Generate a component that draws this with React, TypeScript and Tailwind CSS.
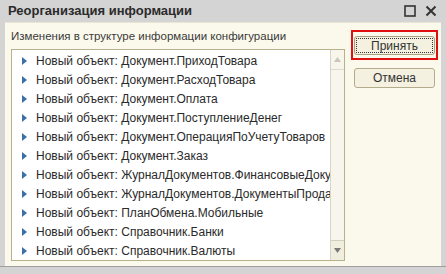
const items = [
  "Новый объект: Документ.ПриходТовара",
  "Новый объект: Документ.РасходТовара",
  "Новый объект: Документ.Оплата",
  "Новый объект: Документ.ПоступлениеДенег",
  "Новый объект: Документ.ОперацияПоУчетуТоваров",
  "Новый объект: Документ.Заказ",
  "Новый объект: ЖурналДокументов.ФинансовыеДокументы",
  "Новый объект: ЖурналДокументов.ДокументыПродаж",
  "Новый объект: ПланОбмена.Мобильные",
  "Новый объект: Справочник.Банки",
  "Новый объект: Справочник.Валюты",
];

function Arrow() {
  return (
    <svg width="5" height="8" viewBox="0 0 5 8" className="shrink-0">
      <path d="M0 0 L5 4 L0 8 Z" fill="#3b6fa8" />
    </svg>
  );
}

export default function App() {
  return (
    <div
      className="w-[446px] h-[274px] bg-[#d4d4d4] flex flex-col overflow-hidden text-[#333]"
      style={{ fontFamily: '"Liberation Sans", Arial, sans-serif' }}
    >
      <div className="h-[22px] flex items-center pl-[8px] pr-[9px] shrink-0">
        <span className="font-bold text-[13px] text-[#2b2b2b] flex-1">Реорганизация информации</span>
        <svg width="12" height="12" viewBox="0 0 12 12" className="mr-[9px]">
          <rect x="1" y="1" width="10" height="10" fill="none" stroke="#333" strokeWidth="1.6" />
        </svg>
        <svg width="12" height="12" viewBox="0 0 12 12">
          <path d="M1.5 1.5 L10.5 10.5 M10.5 1.5 L1.5 10.5" stroke="#333" strokeWidth="2" />
        </svg>
      </div>
      <div className="flex-1 mx-[5px] bg-[#fbf9ec] border-t border-[#e9e6d6] flex pl-[6px] pt-[4px] pb-[5px]">
        <div className="w-[334px] flex flex-col">
          <div className="text-[11.5px] h-[22px] leading-[18px] text-[#3a3a3a]">
            Изменения в структуре информации конфигурации
          </div>
          <div className="flex-1 border border-[#b7b08d] bg-white flex overflow-hidden">
            <div className="flex-1 pt-[1px] overflow-hidden">
              {items.map((t) => (
                <div key={t} className="h-[19px] flex items-center pl-[10px] gap-[9px] whitespace-nowrap">
                  <Arrow />
                  <span className="text-[12px] text-[#2a2a2a]">{t}</span>
                </div>
              ))}
            </div>
            <div className="w-[14px] border-l border-[#d9d5c0] bg-[#f8f6ec] flex flex-col justify-between">
              <div className="h-[20px] border-b border-[#e0dccb] flex items-center justify-center">
                <svg width="7" height="5" viewBox="0 0 7 5">
                  <path d="M0 5 L3.5 0 L7 5 Z" fill="#c9c6b8" />
                </svg>
              </div>
              <div className="h-[20px] border-t border-[#d3cfbb] bg-[#f0eedf] flex items-center justify-center">
                <svg width="7" height="5" viewBox="0 0 7 5">
                  <path d="M0 0 L3.5 5 L7 0 Z" fill="#7a7a7a" />
                </svg>
              </div>
            </div>
          </div>
        </div>
        <div className="flex flex-col items-start pl-[6px] pt-[3px] gap-[8px]">
          <div className="border-2 border-[#e01010] p-[1px]">
            <button className="w-[81px] h-[19px] rounded-[3px] border border-[#a8a080] bg-[#f4f1e0] text-[12px] text-[#333] outline-1 outline-dotted outline-[#333] outline-offset-[-3px]">
              Принять
            </button>
          </div>
          <button className="ml-[3px] w-[81px] h-[20px] rounded-[3px] border border-[#b3ab8c] bg-[#f4f1e0] text-[12px] text-[#333]">
            Отмена
          </button>
        </div>
      </div>
      <div className="h-[9px] shrink-0 border-t border-[#a0a0a0]" />
    </div>
  );
}
